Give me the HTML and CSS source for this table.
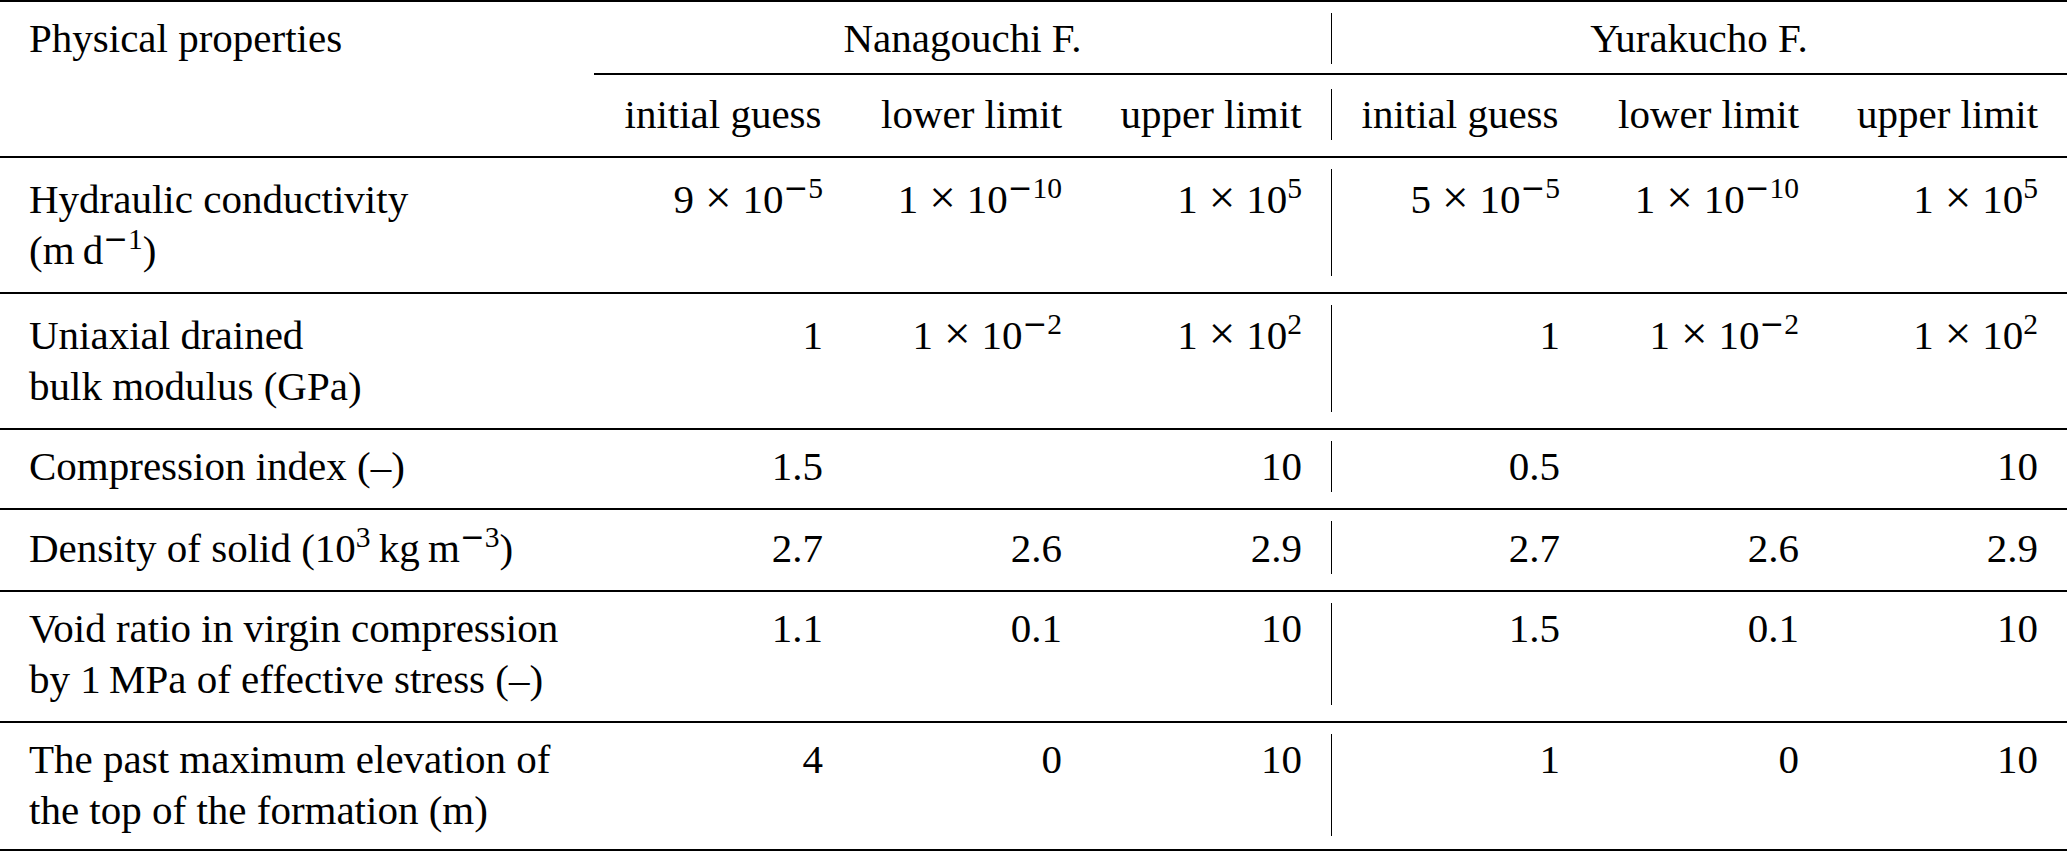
FILE: index.html
```html
<!DOCTYPE html>
<html lang="en">
<head>
<meta charset="utf-8">
<title>Physical properties</title>
<link rel="stylesheet" href="styles.css">
</head>
<body>
<table class="props">
  <colgroup>
    <col class="c-prop">
    <col class="c-guess"><col class="c-lower"><col class="c-upper">
    <col class="c-guess"><col class="c-lower"><col class="c-upper-last">
  </colgroup>
  <thead>
    <tr class="row-group">
      <th class="prop"><div class="cell">Physical properties</div></th>
      <th class="group" colspan="3"><div class="cell">Nanagouchi F.</div></th>
      <th class="group sep" colspan="3"><div class="cell">Yurakucho F.</div></th>
    </tr>
    <tr class="row-sub">
      <th class="prop"><div class="cell"></div></th>
      <th><div class="cell">initial guess</div></th>
      <th><div class="cell">lower limit</div></th>
      <th><div class="cell">upper limit</div></th>
      <th class="sep"><div class="cell">initial guess</div></th>
      <th><div class="cell">lower limit</div></th>
      <th><div class="cell">upper limit</div></th>
    </tr>
  </thead>
  <tbody>
    <tr class="row-sup-tall">
      <td class="prop"><div class="cell">Hydraulic conductivity<br>(m&thinsp;d<sup><span class="neg">&minus;</span>1</sup>)</div></td>
      <td><div class="cell">9<span class="op">×</span>10<sup><span class="neg">&minus;</span>5</sup></div></td>
      <td><div class="cell">1<span class="op">×</span>10<sup><span class="neg">&minus;</span>10</sup></div></td>
      <td><div class="cell">1<span class="op">×</span>10<sup>5</sup></div></td>
      <td class="sep"><div class="cell">5<span class="op">×</span>10<sup><span class="neg">&minus;</span>5</sup><br>&nbsp;</div></td>
      <td><div class="cell">1<span class="op">×</span>10<sup><span class="neg">&minus;</span>10</sup></div></td>
      <td><div class="cell">1<span class="op">×</span>10<sup>5</sup></div></td>
    </tr>
    <tr class="row-sup-tall">
      <td class="prop"><div class="cell">Uniaxial drained<br>bulk modulus (GPa)</div></td>
      <td><div class="cell">1</div></td>
      <td><div class="cell">1<span class="op">×</span>10<sup><span class="neg">&minus;</span>2</sup></div></td>
      <td><div class="cell">1<span class="op">×</span>10<sup>2</sup></div></td>
      <td class="sep"><div class="cell">1<br>&nbsp;</div></td>
      <td><div class="cell">1<span class="op">×</span>10<sup><span class="neg">&minus;</span>2</sup></div></td>
      <td><div class="cell">1<span class="op">×</span>10<sup>2</sup></div></td>
    </tr>
    <tr>
      <td class="prop"><div class="cell">Compression index (–)</div></td>
      <td><div class="cell">1.5</div></td>
      <td><div class="cell"></div></td>
      <td><div class="cell">10</div></td>
      <td class="sep"><div class="cell">0.5</div></td>
      <td><div class="cell"></div></td>
      <td><div class="cell">10</div></td>
    </tr>
    <tr class="row-sup">
      <td class="prop"><div class="cell">Density of solid (10<sup>3</sup>&thinsp;kg&thinsp;m<sup><span class="neg">&minus;</span>3</sup>)</div></td>
      <td><div class="cell">2.7</div></td>
      <td><div class="cell">2.6</div></td>
      <td><div class="cell">2.9</div></td>
      <td class="sep"><div class="cell">2.7</div></td>
      <td><div class="cell">2.6</div></td>
      <td><div class="cell">2.9</div></td>
    </tr>
    <tr>
      <td class="prop"><div class="cell">Void ratio in virgin compression<br>by 1&thinsp;MPa of effective stress (–)</div></td>
      <td><div class="cell">1.1</div></td>
      <td><div class="cell">0.1</div></td>
      <td><div class="cell">10</div></td>
      <td class="sep"><div class="cell">1.5<br>&nbsp;</div></td>
      <td><div class="cell">0.1</div></td>
      <td><div class="cell">10</div></td>
    </tr>
    <tr>
      <td class="prop"><div class="cell">The past maximum elevation of<br>the top of the formation (m)</div></td>
      <td><div class="cell">4</div></td>
      <td><div class="cell">0</div></td>
      <td><div class="cell">10</div></td>
      <td class="sep"><div class="cell">1<br>&nbsp;</div></td>
      <td><div class="cell">0</div></td>
      <td><div class="cell">10</div></td>
    </tr>
  </tbody>
</table>
</body>
</html>
```
FILE: styles.css
```css
* {
  box-sizing: border-box;
}

html,
body {
  margin: 0;
  padding: 0;
  background: #ffffff;
}

body {
  font-family: "Liberation Serif", "Times New Roman", serif;
  font-size: 41px;
  line-height: 51px;
  color: #000000;
}

.props {
  width: 2067px;
  border-collapse: separate;
  border-spacing: 0;
  table-layout: fixed;
}

.c-prop { width: 594px; }
.c-guess { width: 258px; }
.c-lower { width: 239px; }
.c-upper { width: 240px; }
.c-upper-last { width: 239px; }

.props th,
.props td {
  padding: 11px 29px 16px;
  vertical-align: top;
  font-weight: normal;
  text-align: right;
  white-space: nowrap;
  border-bottom: 2px solid #000000;
}

.props .prop {
  text-align: left;
}

/* first header row: top rule + partial rule under the formation groups */
.row-group th {
  border-top: 2px solid #000000;
  padding-bottom: 9px;
  text-align: center;
}

.row-group th.prop {
  text-align: left;
  border-bottom-color: transparent;
}

/* second header row */
.row-sub th {
  padding-top: 14px;
  padding-bottom: 16px;
  text-align: center;
}

/* vertical separator between the two formations (spans the content only) */
.props .sep {
  padding-left: 0;
}

.props .sep .cell {
  border-left: 1px solid #000000;
  padding-left: 28px;
}

.row-sup-tall .cell {
  padding-top: 5px;
}

.row-sup .cell {
  padding-top: 2px;
}

tbody tr:last-child td {
  padding-bottom: 13px;
}

/* math-style binary operator spacing */
.op {
  font-size: 115%;
  line-height: 0;
  margin: 0 11px;
}

sup {
  font-size: 72%;
  line-height: 0;
  vertical-align: 0.52em;
}

/* TeX-like long minus sign */
.neg {
  font-family: "DejaVu Serif", "Liberation Serif", serif;
}
```
